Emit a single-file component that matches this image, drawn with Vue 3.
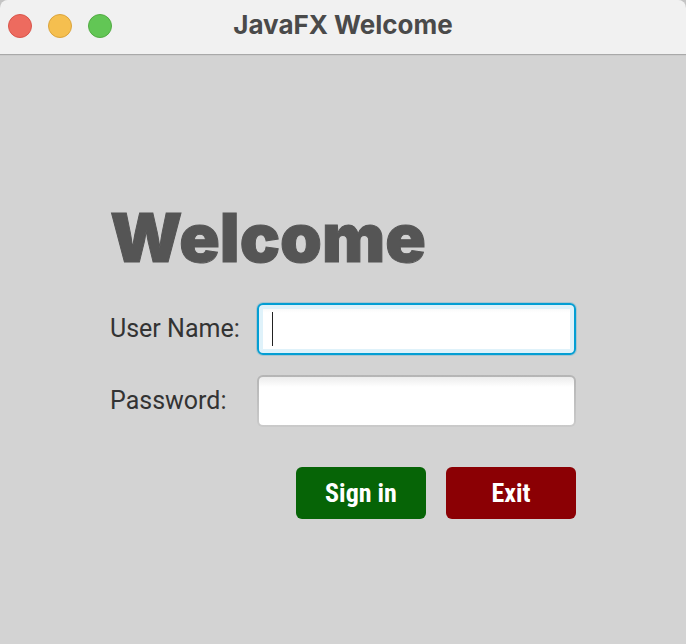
<script setup>
import { ref } from 'vue'

const userName = ref('')
const password = ref('')
const lights = [
  { name: 'close', label: 'Close window' },
  { name: 'minimize', label: 'Minimize window' },
  { name: 'zoom', label: 'Zoom window' },
]
</script>

<template>
  <div class="window">
    <header class="titlebar">
      <div class="lights">
        <button v-for="l in lights" :key="l.name" type="button" class="light" :class="l.name" :aria-label="l.label"></button>
      </div>
      <h1 class="title">JavaFX Welcome</h1>
    </header>
    <main class="content">
      <form class="form" @submit.prevent>
        <h2 class="heading">Welcome</h2>
        <label class="label" for="user">User Name:</label>
        <div class="field">
          <input id="user" v-model="userName" class="input active" type="text" autocomplete="off" />
          <span v-if="!userName" class="caret" aria-hidden="true"></span>
        </div>
        <label class="label" for="pass">Password:</label>
        <div class="field">
          <input id="pass" v-model="password" class="input" type="password" autocomplete="off" />
        </div>
        <div class="actions">
          <button type="submit" class="btn sign-in">Sign in</button>
          <button type="button" class="btn exit">Exit</button>
        </div>
      </form>
    </main>
  </div>
</template>

<style>
body {
  background: #c4c4c4;
}
</style>

<style scoped>
.window {
  display: flex;
  flex-direction: column;
  min-height: 100vh;
  border-radius: 8px 8px 0 0;
  overflow: hidden;
  background: #d3d3d3;
  font-family: Inter, "Liberation Sans", sans-serif;
}
.titlebar {
  display: grid;
  grid-template-columns: 1fr auto 1fr;
  align-items: center;
  height: 54px;
  padding: 0 8px 2px;
  box-sizing: border-box;
  background: #f1f1f1;
  box-shadow: 0 1px 0 #a9a9a9, 0 2px 0 #cbcbcb;
}
.lights {
  display: flex;
  gap: 16px;
}
.light {
  width: 24px;
  height: 24px;
  padding: 0;
  border: 1px solid;
  border-radius: 50%;
}
.close {
  background: #ed6b5f;
  border-color: #d9554b;
}
.minimize {
  background: #f5bf4f;
  border-color: #dba43c;
}
.zoom {
  background: #62c655;
  border-color: #52ab43;
}
.title {
  margin: 0;
  padding-bottom: 2px;
  color: #4a4a4a;
  font-size: 26px;
  font-weight: 700;
  line-height: 32px;
}
.content {
  flex: 1;
  display: flex;
  align-items: center;
  justify-content: center;
  padding-top: 14px;
}
.form {
  display: grid;
  grid-template-columns: 127px 319px;
  gap: 20px;
  align-items: center;
}
.heading {
  grid-column: 1 / -1;
  margin: 0;
  color: #555;
  font-size: 67px;
  font-weight: 900;
  line-height: 90px;
  -webkit-text-stroke: 1px #555;
}
.label {
  color: #333;
  font-family: Roboto, "Liberation Sans", sans-serif;
  font-size: 25px;
  line-height: 32px;
  white-space: nowrap;
}
.field {
  position: relative;
  display: flex;
}
.input {
  width: 100%;
  height: 52px;
  padding: 0 14px;
  box-sizing: border-box;
  border: 2px solid transparent;
  border-radius: 6px;
  outline: none;
  background:
    linear-gradient(#ececec, #fff 10px) padding-box,
    linear-gradient(#b5b5b5, #cacaca) border-box;
  color: #333;
  font: 25px Roboto, "Liberation Sans", sans-serif;
}
.input.active {
  border-color: #039ed3;
  background: linear-gradient(#f4f4f4, #fff 8px) padding-box;
  box-shadow: 0 0 0 1px #a9c5d0, inset 0 0 0 4px #dff2fa;
}
.caret {
  position: absolute;
  top: 9px;
  left: 15px;
  width: 1px;
  height: 34px;
  background: #222;
}
.actions {
  grid-column: 1 / -1;
  display: flex;
  justify-content: flex-end;
  gap: 20px;
  padding-top: 20px;
}
.btn {
  width: 130px;
  height: 52px;
  padding: 0;
  border: 0;
  border-radius: 6px;
  color: #fff;
  font: bold 26px "Liberation Sans Narrow", "Roboto Condensed", Roboto, sans-serif;
}
.sign-in {
  background: #066406;
}
.exit {
  background: #8b0004;
}
</style>
